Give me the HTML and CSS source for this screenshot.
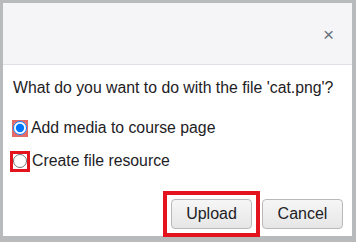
FILE: index.html
```html
<!DOCTYPE html>
<html lang="en">
<head>
    <meta charset="UTF-8">
    <title>Upload</title>
    <link rel="stylesheet" href="styles.css">
</head>
<body>
<div class="dialog">
    <div class="dialog-header">
        <span class="close">&times;</span>
    </div>
    <div class="dialog-body">
        <p class="question">What do you want to do with the file 'cat.png'?</p>
        <label class="option">
            <span class="mark mark-soft"><input type="radio" name="act" checked></span>
            Add media to course page
        </label>
        <label class="option">
            <span class="mark mark-hard"><input type="radio" name="act"></span>
            Create file resource
        </label>
    </div>
    <div class="dialog-footer">
        <span class="frame"><button class="btn">Upload</button></span>
        <button class="btn">Cancel</button>
    </div>
</div>
</body>
</html>
```

FILE: styles.css
```css
body {
    margin: 0;
    padding: 3px 4px 0 3px;
    background-color: #b8babc;
    font-family: "Liberation Sans", Arial, sans-serif;
    color: #1d2125;
    height: 242px;
    box-sizing: border-box;
    overflow: hidden;
}
.dialog {
    background-color: #fff;
    height: 233px;
    display: flex;
    flex-direction: column;
}
.dialog-header {
    height: 61px;
    background-color: #f5f5f8;
    border-bottom: 1px solid #dee2e6;
    display: flex;
    align-items: center;
    justify-content: flex-end;
    padding-right: 18px;
}
.close {
    font-size: 19px;
    color: #6a737b;
    line-height: 1;
    margin-top: 2px;
}
.dialog-body {
    padding: 0 6px;
}
.question {
    margin: 13px 0 0 4px;
    font-size: 15.8px;
    line-height: 20px;
}
.option {
    display: flex;
    align-items: center;
    font-size: 15.8px;
    height: 20px;
}
.option:first-of-type {
    margin-top: 20px;
}
.option + .option {
    margin-top: 13px;
}
.mark {
    display: inline-flex;
    align-items: center;
    justify-content: center;
    margin-right: 2px;
}
.mark input {
    margin: 0;
    width: 14px;
    height: 14px;
}
.mark-soft {
    width: 16px;
    height: 17px;
    margin-left: 3px;
    margin-right: 3px;
    background-color: #e46a6a;
}
.mark-hard {
    width: 14px;
    height: 15px;
    margin-left: 1px;
    border: 3px solid #e3141e;
}
.dialog-footer {
    margin-top: auto;
    display: flex;
    justify-content: flex-end;
    align-items: flex-end;
    padding-right: 9px;
    gap: 2px;
}
.frame {
    border: 4px solid #e3141e;
    padding: 4px;
    margin-bottom: -1px;
}
.btn {
    font-family: "Liberation Sans", Arial, sans-serif;
    font-size: 16px;
    color: #1d2125;
    width: 81px;
    height: 30px;
    background: linear-gradient(#f6f6f6, #e6e6e6);
    border: 1px solid #b9b9b9;
    border-radius: 4px;
}
.dialog-footer > .btn {
    margin-bottom: 7px;
}
```
